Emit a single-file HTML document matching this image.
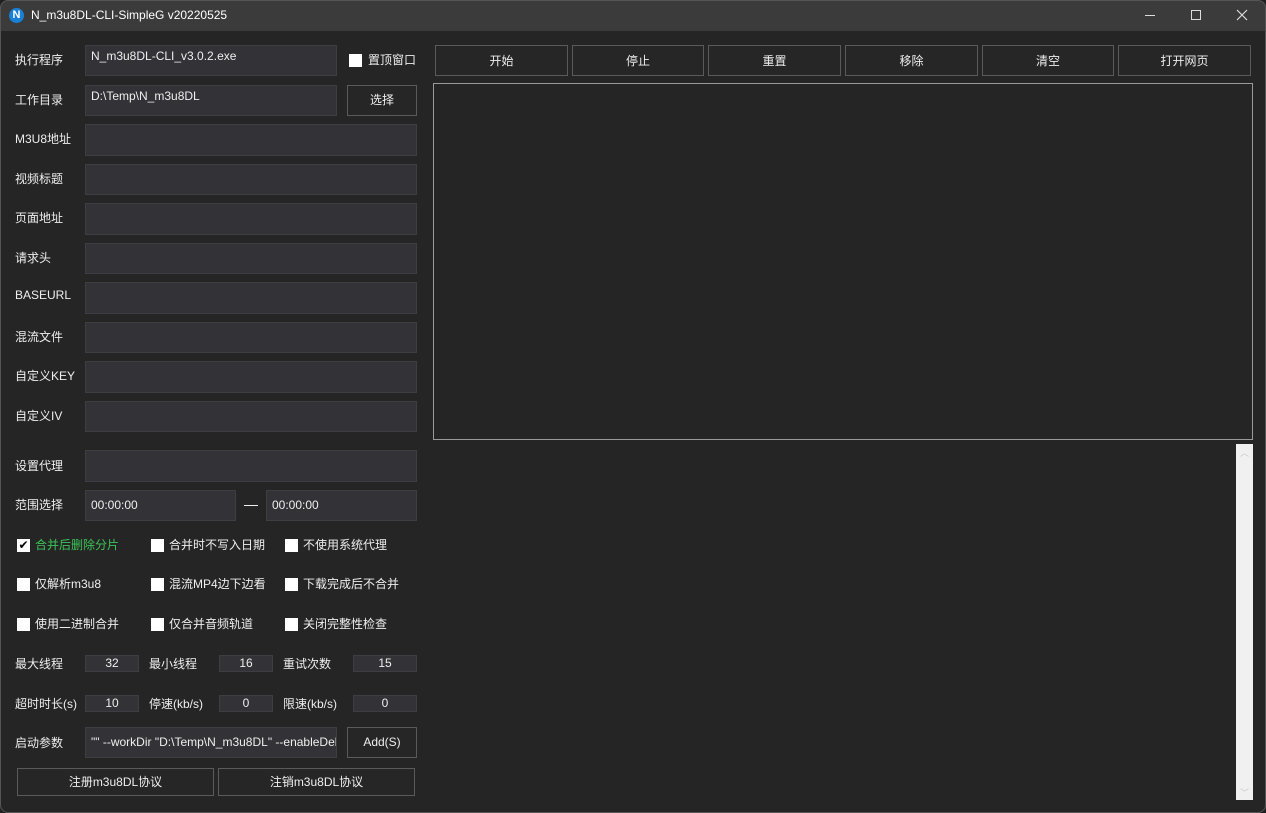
<!DOCTYPE html><html><head><meta charset="utf-8"><style>
*{box-sizing:border-box;margin:0;padding:0}
body{width:1266px;height:813px;background:#202020;font-family:"Liberation Sans","Noto Sans CJK SC",sans-serif;font-size:12px;color:#eee;position:relative;overflow:hidden}
.win{position:absolute;left:0;top:0;width:1266px;height:813px;border-radius:8px;background:#252525;overflow:hidden}
.bd{position:absolute;left:0;top:0;width:1266px;height:813px;border:1px solid #555;border-radius:8px;pointer-events:none}
.tb{position:absolute;left:0;top:0;width:100%;height:31px;background:#3b3b3b}
.a{position:absolute}
.lbl{position:absolute;font-size:12px;color:#eee;white-space:nowrap;margin-top:-2px}
.in{position:absolute;background:#333337;border:1px solid #3e3e42;color:#eee;padding:0 5px;white-space:nowrap;overflow:hidden;font-size:12px}
.btn{position:absolute;border:1px solid #5a5a5a;background:#262626;color:#eee;text-align:center;font-size:12px}
.cb{position:absolute;width:13px;height:13px;background:#fff}
</style></head><body><div class="win">
<div class="tb"></div>
<div class="a" style="left:9px;top:8px;width:15px;height:15px;border-radius:50%;background:#1a7fd6;color:#fff;font-weight:bold;font-size:11px;text-align:center;line-height:15px">N</div>
<div class="lbl" style="left:31px;top:10px;color:#fff">N_m3u8DL-CLI-SimpleG v20220525</div>
<div class="a" style="left:1145px;top:15px;width:10px;height:1px;background:#ddd"></div>
<div class="a" style="left:1191px;top:10px;width:10px;height:10px;border:1px solid #ddd"></div>
<svg class="a" style="left:1236px;top:9px" width="12" height="12"><path d="M1 1L11 11M11 1L1 11" stroke="#ddd" stroke-width="1.2"/></svg>

<div class="lbl" style="left:15px;top:53px">执行程序</div>
<div class="in" style="left:85px;top:45px;width:252px;height:31px;padding-top:3px">N_m3u8DL-CLI_v3.0.2.exe</div>
<div class="cb" style="left:349px;top:54px"></div>
<div class="lbl" style="left:368px;top:53px">置顶窗口</div>
<div class="lbl" style="left:15px;top:93px">工作目录</div>
<div class="in" style="left:85px;top:85px;width:252px;height:31px;padding-top:3px">D:\Temp\N_m3u8DL</div>
<div class="btn" style="left:347px;top:85px;width:70px;height:31px;line-height:29px">选择</div>

<div class="lbl" style="left:15px;top:132px">M3U8地址</div><div class="in" style="left:85px;top:124px;width:332px;height:32px"></div>
<div class="lbl" style="left:15px;top:172px">视频标题</div><div class="in" style="left:85px;top:164px;width:332px;height:31px"></div>
<div class="lbl" style="left:15px;top:211px">页面地址</div><div class="in" style="left:85px;top:203px;width:332px;height:32px"></div>
<div class="lbl" style="left:15px;top:251px">请求头</div><div class="in" style="left:85px;top:243px;width:332px;height:31px"></div>
<div class="lbl" style="left:15px;top:290px">BASEURL</div><div class="in" style="left:85px;top:282px;width:332px;height:32px"></div>
<div class="lbl" style="left:15px;top:330px">混流文件</div><div class="in" style="left:85px;top:322px;width:332px;height:31px"></div>
<div class="lbl" style="left:15px;top:369px">自定义KEY</div><div class="in" style="left:85px;top:361px;width:332px;height:32px"></div>
<div class="lbl" style="left:15px;top:409px">自定义IV</div><div class="in" style="left:85px;top:401px;width:332px;height:31px"></div>
<div class="lbl" style="left:15px;top:459px">设置代理</div><div class="in" style="left:85px;top:450px;width:332px;height:32px"></div>
<div class="lbl" style="left:15px;top:498px">范围选择</div>
<div class="in" style="left:85px;top:490px;width:151px;height:31px;line-height:29px">00:00:00</div>
<div class="a" style="left:244px;top:505px;width:14px;height:1px;background:#eee"></div>
<div class="in" style="left:266px;top:490px;width:151px;height:31px;line-height:29px">00:00:00</div>

<div class="cb" style="left:17px;top:539px;color:#000;font-size:12px;line-height:13px;text-align:center">✔</div><div class="lbl" style="left:35px;top:538px;color:#3cc456">合并后删除分片</div>
<div class="cb" style="left:151px;top:539px"></div><div class="lbl" style="left:169px;top:538px">合并时不写入日期</div>
<div class="cb" style="left:285px;top:539px"></div><div class="lbl" style="left:303px;top:538px">不使用系统代理</div>
<div class="cb" style="left:17px;top:578px"></div><div class="lbl" style="left:35px;top:577px">仅解析m3u8</div>
<div class="cb" style="left:151px;top:578px"></div><div class="lbl" style="left:169px;top:577px">混流MP4边下边看</div>
<div class="cb" style="left:285px;top:578px"></div><div class="lbl" style="left:303px;top:577px">下载完成后不合并</div>
<div class="cb" style="left:17px;top:618px"></div><div class="lbl" style="left:35px;top:617px">使用二进制合并</div>
<div class="cb" style="left:151px;top:618px"></div><div class="lbl" style="left:169px;top:617px">仅合并音频轨道</div>
<div class="cb" style="left:285px;top:618px"></div><div class="lbl" style="left:303px;top:617px">关闭完整性检查</div>

<div class="lbl" style="left:15px;top:657px">最大线程</div><div class="in" style="left:85px;top:655px;width:54px;height:17px;text-align:center;line-height:15px">32</div>
<div class="lbl" style="left:149px;top:657px">最小线程</div><div class="in" style="left:219px;top:655px;width:54px;height:17px;text-align:center;line-height:15px">16</div>
<div class="lbl" style="left:283px;top:657px">重试次数</div><div class="in" style="left:353px;top:655px;width:64px;height:17px;text-align:center;line-height:15px">15</div>
<div class="lbl" style="left:15px;top:697px">超时时长(s)</div><div class="in" style="left:85px;top:695px;width:54px;height:17px;text-align:center;line-height:15px">10</div>
<div class="lbl" style="left:149px;top:697px">停速(kb/s)</div><div class="in" style="left:219px;top:695px;width:54px;height:17px;text-align:center;line-height:15px">0</div>
<div class="lbl" style="left:283px;top:697px">限速(kb/s)</div><div class="in" style="left:353px;top:695px;width:64px;height:17px;text-align:center;line-height:15px">0</div>

<div class="lbl" style="left:15px;top:736px">启动参数</div>
<div class="in" style="left:85px;top:727px;width:252px;height:31px;line-height:29px">"" --workDir "D:\Temp\N_m3u8DL" --enableDelAfterDone</div>
<div class="btn" style="left:347px;top:727px;width:70px;height:31px;line-height:29px">Add(S)</div>
<div class="btn" style="left:17px;top:768px;width:197px;height:28px;line-height:26px">注册m3u8DL协议</div>
<div class="btn" style="left:218px;top:768px;width:197px;height:28px;line-height:26px">注销m3u8DL协议</div>

<div class="btn" style="left:435px;top:45px;width:133px;height:31px;line-height:31px">开始</div>
<div class="btn" style="left:572px;top:45px;width:132px;height:31px;line-height:31px">停止</div>
<div class="btn" style="left:708px;top:45px;width:133px;height:31px;line-height:31px">重置</div>
<div class="btn" style="left:845px;top:45px;width:133px;height:31px;line-height:31px">移除</div>
<div class="btn" style="left:982px;top:45px;width:132px;height:31px;line-height:31px">清空</div>
<div class="btn" style="left:1118px;top:45px;width:133px;height:31px;line-height:31px">打开网页</div>
<div class="a" style="left:433px;top:83px;width:820px;height:357px;border:1px solid #9a9a9a;background:#252525"></div>
<div class="a" style="left:1236px;top:444px;width:17px;height:356px;background:#f0f0f0"></div>
<div class="lbl" style="left:1240px;top:448px;color:#c8c8c8;font-size:9px">︿</div>
<div class="lbl" style="left:1240px;top:788px;color:#c8c8c8;font-size:9px">﹀</div>
</div><div class="bd"></div></body></html>
